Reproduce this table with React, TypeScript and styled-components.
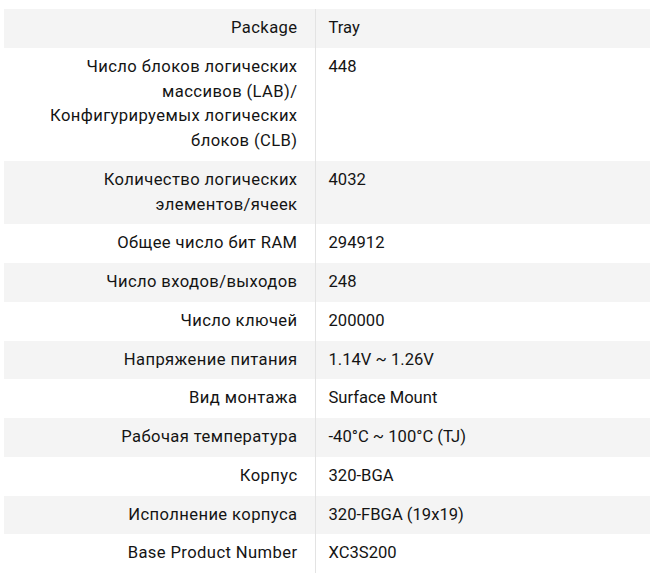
import React from "react";
import styled, { createGlobalStyle } from "styled-components";

const Global = createGlobalStyle`
  html, body { margin: 0; padding: 0; background: #fff; }
  body { font-family: Roboto, "Noto Sans", sans-serif; }
`;

const Wrap = styled.div`
  padding: 9px 1px 0 4px;
`;

const Table = styled.table`
  width: 100%;
  border-collapse: collapse;
  font-size: 16.6px;
  line-height: 24.75px;
  color: #141414;
`;

const Row = styled.tr<{ $shaded: boolean }>`
  background: ${(p) => (p.$shaded ? "#f4f4f4" : "#ffffff")};
`;

const Label = styled.td`
  width: 311px;
  box-sizing: border-box;
  text-align: right;
  vertical-align: top;
  padding: 7px 17px 7px 22px;
  letter-spacing: 0.4px;
  border-right: 1px solid #e3e3e3;
`;

const Value = styled.td`
  text-align: left;
  vertical-align: top;
  padding: 7px 14px 7px 13px;
`;

const rows: [string, string][] = [
  ["Package", "Tray"],
  ["Число блоков логических массивов (LAB)/ Конфигурируемых логических блоков (CLB)", "448"],
  ["Количество логических элементов/ячеек", "4032"],
  ["Общее число бит RAM", "294912"],
  ["Число входов/выходов", "248"],
  ["Число ключей", "200000"],
  ["Напряжение питания", "1.14V ~ 1.26V"],
  ["Вид монтажа", "Surface Mount"],
  ["Рабочая температура", "-40°C ~ 100°C (TJ)"],
  ["Корпус", "320-BGA"],
  ["Исполнение корпуса", "320-FBGA (19x19)"],
  ["Base Product Number", "XC3S200"],
];

export default function App() {
  return (
    <>
      <Global />
      <Wrap>
        <Table>
          <tbody>
            {rows.map(([k, v], i) => (
              <Row key={k} $shaded={i % 2 === 0}>
                <Label>{k}</Label>
                <Value>{v}</Value>
              </Row>
            ))}
          </tbody>
        </Table>
      </Wrap>
    </>
  );
}
